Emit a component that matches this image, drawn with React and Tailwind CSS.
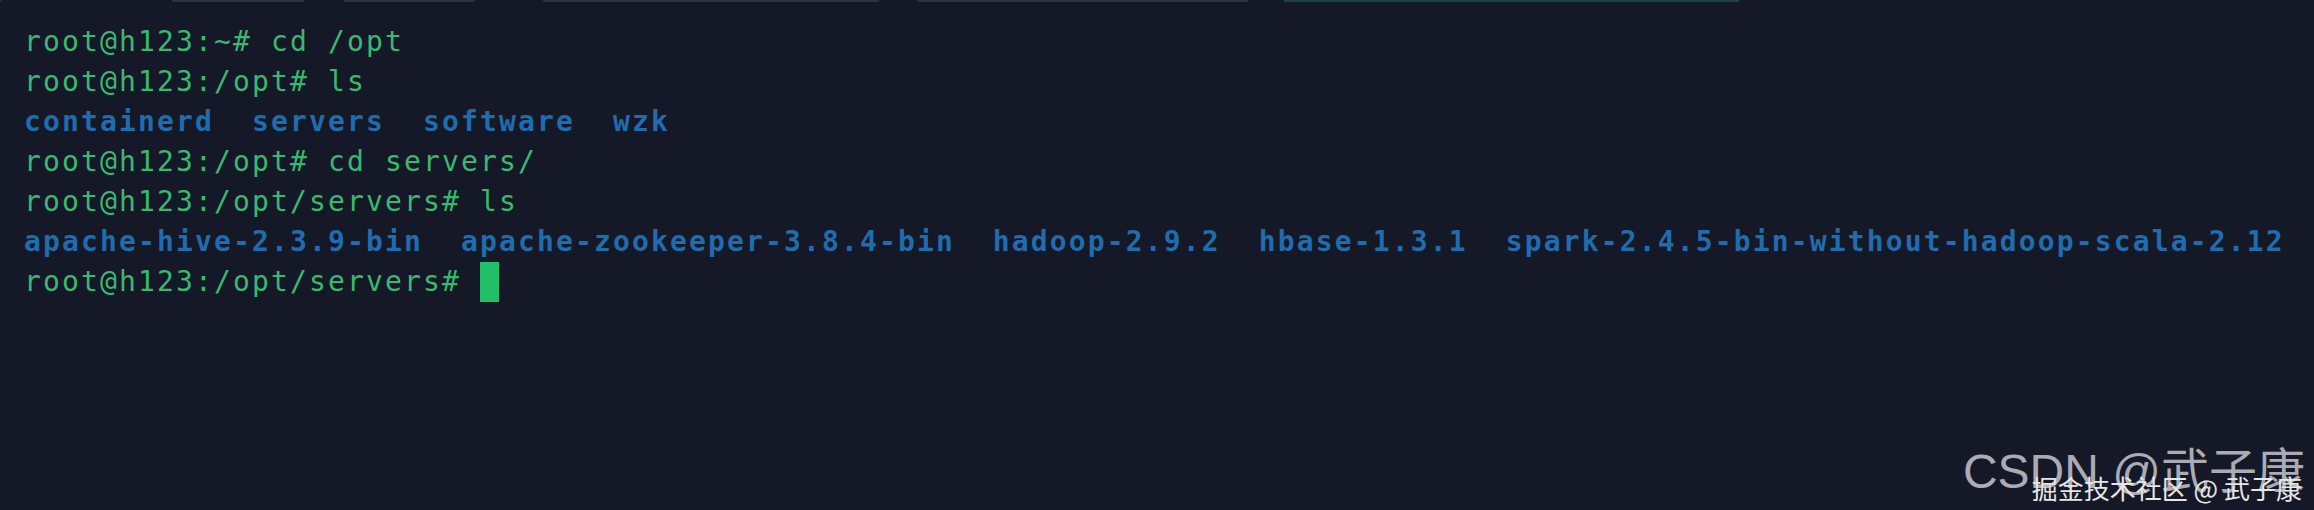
export default function App() {
  const mono = { fontFamily: '"DejaVu Sans Mono", monospace' };
  const green = "text-[#3ab870]";
  const blue = "text-[#1f6cae] font-bold";
  return (
    <div className="w-[2314px] h-[510px] bg-[#151927] relative overflow-hidden">
      <div className="flex h-[2px]">
        <div className="w-[2px] bg-[#262b3b]" />
        <div className="w-[170px]" />
        <div className="w-[132px] bg-[#2a2f41]" />
        <div className="w-[40px]" />
        <div className="w-[131px] bg-[#2a2f41]" />
        <div className="w-[68px]" />
        <div className="w-[336px] bg-[#2a2f41]" />
        <div className="w-[38px]" />
        <div className="w-[331px] bg-[#2a2f41]" />
        <div className="w-[36px]" />
        <div className="w-[455px] bg-[#1b4446]" />
      </div>
      <div
        className="pt-[20px] pl-[24px] text-[28px] leading-[40px] tracking-[2.14px] whitespace-pre"
        style={mono}
      >
        <div className={green}>root@h123:~# cd /opt</div>
        <div className={green}>root@h123:/opt# ls</div>
        <div className={blue}>containerd  servers  software  wzk</div>
        <div className={green}>root@h123:/opt# cd servers/</div>
        <div className={green}>root@h123:/opt/servers# ls</div>
        <div className={blue}>
          apache-hive-2.3.9-bin  apache-zookeeper-3.8.4-bin  hadoop-2.9.2  hbase-1.3.1  spark-2.4.5-bin-without-hadoop-scala-2.12
        </div>
        <div className={`${green} flex items-center`}>
          <span>root@h123:/opt/servers# </span>
          <span className="w-[19px] h-[40px] bg-[#22bf69]" />
        </div>
      </div>
      <div className="absolute right-[9px] bottom-[14px] text-[48px] leading-none text-[#a9acb4]"
        style={{ fontFamily: '"Liberation Sans", "Noto Sans CJK SC", sans-serif' }}>
        CSDN @武子康
      </div>
      <div className="absolute right-[12px] bottom-[9px] text-[26px] leading-none text-[#e6e6e6]"
        style={{ fontFamily: '"Noto Sans CJK SC", sans-serif' }}>
        掘金技术社区 @ 武子康
      </div>
    </div>
  );
}
